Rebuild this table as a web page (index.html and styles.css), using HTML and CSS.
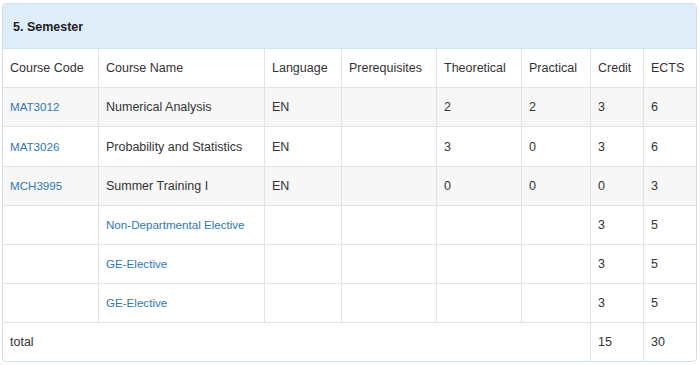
FILE: index.html
```html
<!DOCTYPE html>
<html>
<head>
<meta charset="utf-8">
<link rel="stylesheet" href="styles.css">
</head>
<body>
<div class="panel">
  <div class="panel-heading">5. Semester</div>
  <table class="grid">
    <colgroup>
      <col class="c1"><col class="c2"><col class="c3"><col class="c4"><col class="c5"><col class="c6"><col class="c7"><col class="c8">
    </colgroup>
    <tbody>
      <tr>
        <td>Course Code</td><td>Course Name</td><td>Language</td><td>Prerequisites</td><td>Theoretical</td><td>Practical</td><td>Credit</td><td>ECTS</td>
      </tr>
      <tr class="stripe">
        <td><a href="#">MAT3012</a></td><td>Numerical Analysis</td><td>EN</td><td></td><td>2</td><td>2</td><td>3</td><td>6</td>
      </tr>
      <tr class="tall">
        <td><a href="#">MAT3026</a></td><td>Probability and Statistics</td><td>EN</td><td></td><td>3</td><td>0</td><td>3</td><td>6</td>
      </tr>
      <tr class="stripe">
        <td><a href="#">MCH3995</a></td><td>Summer Training I</td><td>EN</td><td></td><td>0</td><td>0</td><td>0</td><td>3</td>
      </tr>
      <tr>
        <td></td><td><a href="#">Non-Departmental Elective</a></td><td></td><td></td><td></td><td></td><td>3</td><td>5</td>
      </tr>
      <tr>
        <td></td><td><a href="#">GE-Elective</a></td><td></td><td></td><td></td><td></td><td>3</td><td>5</td>
      </tr>
      <tr>
        <td></td><td><a href="#">GE-Elective</a></td><td></td><td></td><td></td><td></td><td>3</td><td>5</td>
      </tr>
      <tr class="last">
        <td colspan="6">total</td><td>15</td><td>30</td>
      </tr>
    </tbody>
  </table>
</div>
</body>
</html>
```
FILE: styles.css
```css
html, body {
  margin: 0;
  padding: 0;
  background: #fff;
}
body {
  font-family: "Liberation Sans", Arial, sans-serif;
  font-size: 12.5px;
  color: #333;
}
.panel {
  margin: 3px 3px 0 2px;
  width: 695px;
  box-sizing: border-box;
  border: 1px solid #cfe0ea;
  border-radius: 4px;
  overflow: hidden;
  background: #fff;
}
.panel-heading {
  height: 45px;
  box-sizing: border-box;
  border-bottom: 1px solid #d4e4ee;
  background: #dfedf8;
  color: #222;
  font-weight: bold;
  padding: 2px 10px 0;
  display: flex;
  align-items: center;
  font-size: 12.5px;
}
.grid {
  width: 100%;
  border-collapse: separate;
  border-spacing: 0;
  table-layout: fixed;
}
.c1 { width: 96px; }
.c2 { width: 166px; }
.c3 { width: 77px; }
.c4 { width: 95px; }
.c5 { width: 85px; }
.c6 { width: 69px; }
.c7 { width: 53px; }
.c8 { width: auto; }
.grid td {
  height: 39px;
  box-sizing: border-box;
  padding: 0 7px;
  border-right: 1px solid #e3e3e3;
  border-bottom: 1px solid #e3e3e3;
  vertical-align: middle;
  white-space: nowrap;
}
.grid td:last-child {
  border-right: 0;
}
.grid tr.tall td {
  height: 40px;
}
.grid tr.last td {
  border-bottom: 0;
  height: 38px;
}
.grid tr.stripe td {
  background: #f7f7f7;
}
.grid a {
  color: #2f78b5;
  text-decoration: none;
  font-size: 11.6px;
}
```
